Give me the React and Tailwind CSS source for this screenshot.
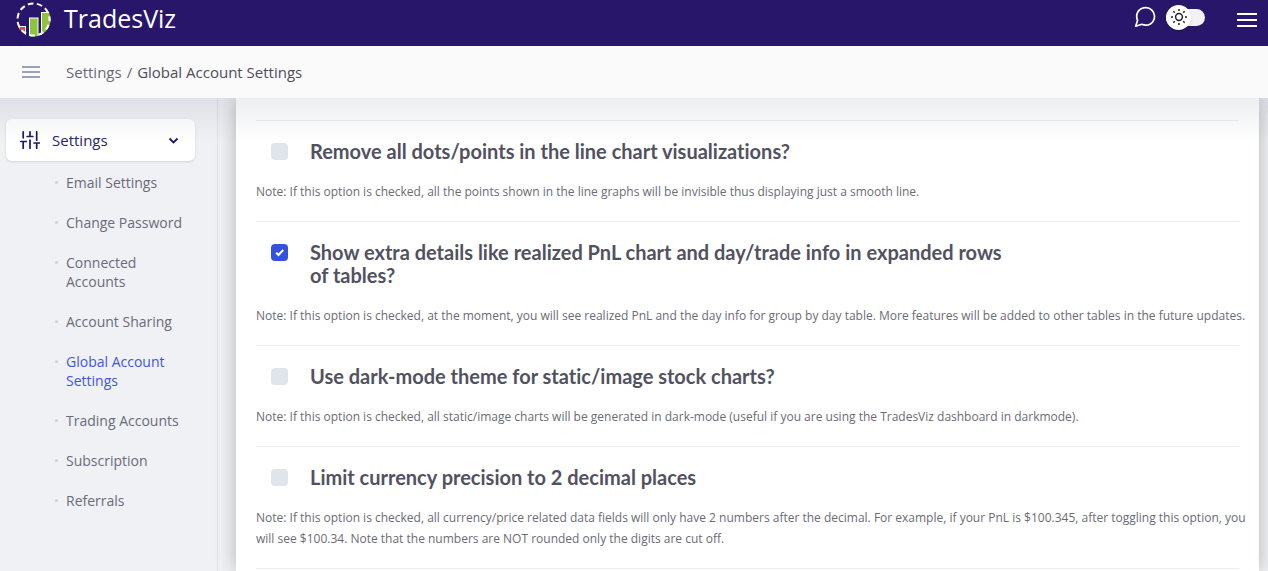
import React from "react";

const links = [
  "Email Settings",
  "Change Password",
  "Connected Accounts",
  "Account Sharing",
  "Global Account Settings",
  "Trading Accounts",
  "Subscription",
  "Referrals",
];

const options = [
  {
    id: "remove-dots",
    title: "Remove all dots/points in the line chart visualizations?",
    note: "Note: If this option is checked, all the points shown in the line graphs will be invisible thus displaying just a smooth line.",
  },
  {
    id: "extra-details",
    checked: true,
    title:
      "Show extra details like realized PnL chart and day/trade info in expanded rows of tables?",
    note: "Note: If this option is checked, at the moment, you will see realized PnL and the day info for group by day table. More features will be added to other tables in the future updates.",
  },
  {
    id: "dark-charts",
    title: "Use dark-mode theme for static/image stock charts?",
    note: "Note: If this option is checked, all static/image charts will be generated in dark-mode (useful if you are using the TradesViz dashboard in darkmode).",
  },
  {
    id: "currency-precision",
    title: "Limit currency precision to 2 decimal places",
    note: "Note: If this option is checked, all currency/price related data fields will only have 2 numbers after the decimal. For example, if your PnL is $100.345, after toggling this option, you will see $100.34. Note that the numbers are NOT rounded only the digits are cut off.",
  },
];

function Logo() {
  return (
    <svg className="size-9" viewBox="0 0 36 36" aria-hidden="true">
      <clipPath id="logo-disc">
        <circle cx="17.500" cy="18.500" r="17" />
      </clipPath>
      <g clipPath="url(#logo-disc)" stroke="#fff" strokeWidth="1">
        <rect x="3" y="25.500" width="6.500" height="12" fill="#dc4b50" />
        <rect x="13.500" y="17" width="8.500" height="20" fill="#8fc33c" />
        <rect x="25.500" y="11.500" width="9" height="26" fill="#8fc33c" />
      </g>
      <circle
        cx="17.500"
        cy="18.500"
        r="16"
        fill="none"
        stroke="#fff"
        strokeWidth="2"
        strokeDasharray="5.600 3.539"
        strokeDashoffset="3.850"
      />
    </svg>
  );
}

function ChatIcon() {
  return (
    <svg className="size-6" viewBox="0 0 24 24" fill="none" stroke="#fff" strokeWidth="1.700" strokeLinecap="round" strokeLinejoin="round" aria-hidden="true">
      <path d="M21.500 11.500a8.700 8.700 0 0 1-.9 3.800 8.900 8.900 0 0 1-7.900 4.900 8.700 8.700 0 0 1-3.900-.9L2.700 21.200l1.900-5.900a8.700 8.700 0 0 1-.9-3.800 8.900 8.900 0 0 1 4.900-7.900 8.700 8.700 0 0 1 3.900-.9h.5a8.800 8.800 0 0 1 8.500 8.300v.5z" />
    </svg>
  );
}

function SunIcon() {
  return (
    <svg className="size-4" viewBox="0 0 16 16" fill="none" stroke="#222" strokeWidth="1.500" aria-hidden="true">
      <circle cx="8" cy="8" r="3.400" />
      <path d="M8 0v2M8 14v2M0 8h2M14 8h2M2.300 2.300l1.500 1.500M12.200 12.200l1.500 1.500M2.300 13.700l1.500-1.500M12.200 3.800l1.500-1.500" />
    </svg>
  );
}

function SlidersIcon() {
  return (
    <svg className="size-5" viewBox="0 0 20 20" fill="none" stroke="#1f1664" strokeWidth="1.700" strokeLinecap="round" aria-hidden="true">
      <path d="M3.200 1.800v6M3.200 11.500v6.700M.8 11.500h5.600M10 1.800v4.700M10 10v8.200M7.200 6.500h5.600M16.700 1.800v8.400M16.700 13v5.200M14 13h5.400" />
    </svg>
  );
}

function Option({ id, title, note, checked }) {
  return (
    <section className="border-b border-[#eeeff2] py-[19px]">
      <div className="flex items-start gap-[22px] pl-[15px]">
        <span className="mt-[3px] grid size-[17px] shrink-0">
          <input
            id={id}
            type="checkbox"
            defaultChecked={checked}
            aria-describedby={id + "-note"}
            className="peer col-start-1 row-start-1 size-[17px] appearance-none rounded-[4px] bg-[#e0e4eb] checked:bg-[#3353de]"
          />
          <svg className="pointer-events-none invisible col-start-1 row-start-1 size-[17px] peer-checked:visible" viewBox="0 0 17 17" fill="none" stroke="#fff" strokeWidth="2" aria-hidden="true">
            <path d="M5.200 8.800l2.300 2.200 4.700-5" />
          </svg>
        </span>
        <label htmlFor={id} className="max-w-[710px] text-[20px] leading-[23px] font-bold text-[#52525f]">
          {title}
        </label>
      </div>
      <p id={id + "-note"} className="mt-[18px] -mr-2 font-['Open_Sans',sans-serif] text-[12px] leading-[21px] text-[#6b6b74]">
        {note}
      </p>
    </section>
  );
}

export default function App() {
  return (
    <div className="flex h-screen flex-col overflow-hidden bg-[#f0f1f4] font-['Lato',sans-serif] [font-variant-ligatures:none]">
      <header className="flex h-[46px] shrink-0 items-start justify-between bg-[#27166a] pr-[11px] pl-4">
        <a href="#home" className="flex items-center gap-3">
          <Logo />
          <span className="font-['Open_Sans',sans-serif] text-[25px] text-white">TradesViz</span>
        </a>
        <div className="flex h-[34px] items-center">
          <button type="button" aria-label="Chat" className="mr-[9px]">
            <ChatIcon />
          </button>
          <button type="button" role="switch" aria-checked="false" aria-label="Dark mode" className="flex h-[17px] w-[39px] items-center rounded-full bg-[#f2f2f4]">
            <span className="flex size-[25px] shrink-0 items-center justify-center rounded-full bg-white shadow">
              <SunIcon />
            </span>
          </button>
          <button type="button" aria-label="Open menu" className="mt-[6px] ml-8 flex w-5 flex-col gap-1">
            <span className="h-[2px] bg-white" />
            <span className="h-[2px] bg-white" />
            <span className="h-[2px] bg-white" />
          </button>
        </div>
      </header>

      <nav aria-label="Breadcrumb" className="flex h-[52px] shrink-0 items-center bg-[#fafafa] pl-[22px]">
        <button type="button" aria-label="Toggle sidebar" className="flex w-[18px] flex-col gap-[3px]">
          <span className="h-[2px] bg-[#9aa1bb]" />
          <span className="h-[2px] bg-[#9aa1bb]" />
          <span className="h-[2px] bg-[#9aa1bb]" />
        </button>
        <ol className="ml-[26px] flex items-center gap-[5px] font-['Open_Sans',sans-serif] text-[15px] leading-5 text-[#696977]">
          <li><a href="#settings">Settings</a></li>
          <li aria-hidden="true">/</li>
          <li className="font-medium text-[#4d4d5c]" aria-current="page">Global Account Settings</li>
        </ol>
      </nav>

      <div className="relative flex min-h-0 grow overflow-hidden">
        <div className="pointer-events-none absolute inset-x-0 top-0 z-10 h-11 bg-linear-to-b from-[#1c275014] via-[#1c27500a] to-transparent" />
        <aside className="w-[218px] shrink-0 border-r border-[#dfe1e5] pt-[21px] pr-[22px] pl-[6px]">
          <button type="button" aria-expanded="true" className="flex h-[42px] w-full items-center rounded-md bg-white pr-4 pl-[14px] shadow-sm">
            <SlidersIcon />
            <span className="ml-3 font-['Open_Sans',sans-serif] text-[15px] leading-5 text-[#2c2368]">Settings</span>
            <svg className="ml-auto size-[11px]" viewBox="0 0 11 11" fill="none" stroke="#1f1664" strokeWidth="1.800" aria-hidden="true">
              <path d="M1.500 3.500l4 4 4-4" />
            </svg>
          </button>
          <ul className="mt-3 flex flex-col gap-[21px] pl-[49px]">
            {links.map((label) => (
              <li key={label} className="flex gap-2">
                <span className="mt-2 size-[3px] shrink-0 rounded-full bg-[#d0d2d8]" />
                <a
                  href="#settings"
                  className={
                    label === "Global Account Settings"
                      ? "font-['Open_Sans',sans-serif] text-[14px] leading-[19px] text-[#3f57dc]"
                      : "font-['Open_Sans',sans-serif] text-[14px] leading-[19px] text-[#6b6b7b]"
                  }
                >
                  {label}
                </a>
              </li>
            ))}
          </ul>
        </aside>
        <main className="mr-[9px] ml-[18px] min-w-0 grow bg-white px-5 shadow-[0_0_18px_rgba(0,0,0,0.250)]">
          <div className="h-[23px] border-b border-[#eeeff2]" />
          {options.map((o) => (
            <Option key={o.id} {...o} />
          ))}
        </main>
      </div>
    </div>
  );
}
